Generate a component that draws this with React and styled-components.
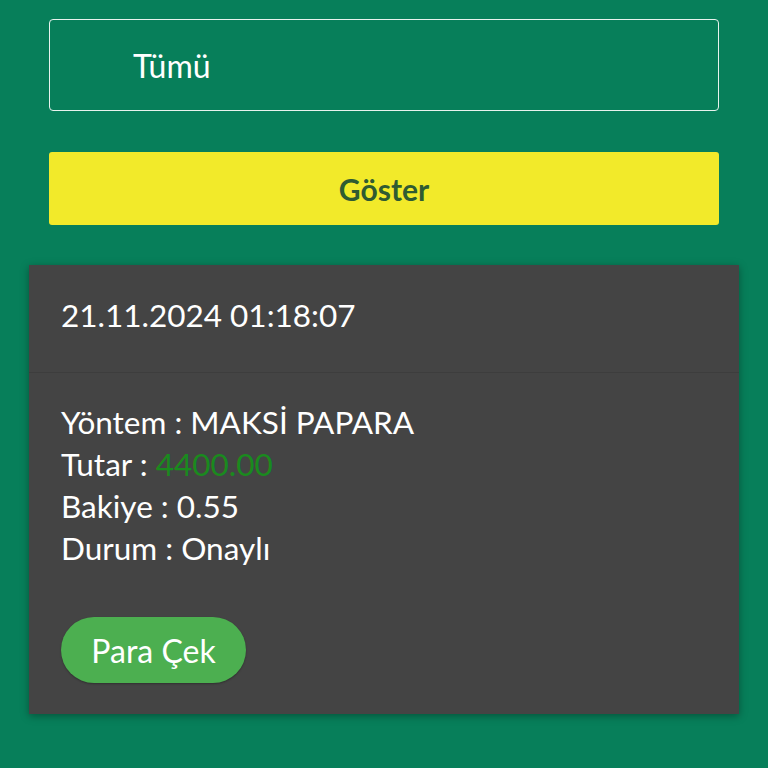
import React from 'react';
import styled, { createGlobalStyle } from 'styled-components';

const GlobalStyle = createGlobalStyle`
  html, body {
    margin: 0;
    padding: 0;
    background: #077f5a;
    font-family: Lato, "Noto Sans", sans-serif;
  }
`;

export default function App() {
    return (
        <Page>
            <GlobalStyle />
            <Filters>
                <Select>Tümü</Select>
                <ShowButton>Göster</ShowButton>
            </Filters>
            <Card>
                <CardHeader>21.11.2024 01:18:07</CardHeader>
                <CardBody>
                    <Line>Yöntem : MAKSİ PAPARA</Line>
                    <Line>Tutar : <Amount>4400.00</Amount></Line>
                    <Line>Bakiye : 0.55</Line>
                    <Line>Durum : Onaylı</Line>
                    <WithdrawButton>Para Çek</WithdrawButton>
                </CardBody>
            </Card>
        </Page>
    );
}

const Page = styled.div`
    display: flex;
    flex-direction: column;
    padding: 19px 29px 40px;
    min-height: 768px;
    box-sizing: border-box;
`;

const Filters = styled.div`
    display: flex;
    flex-direction: column;
    gap: 41px;
    margin: 0 20px 40px;
`;

const Select = styled.div`
    height: 92px;
    box-sizing: border-box;
    border: 1.5px solid #e8f3ee;
    border-radius: 4px;
    display: flex;
    align-items: center;
    padding-left: 83px;
    color: #fff;
    font-size: 32px;
`;

const ShowButton = styled.div`
    height: 73px;
    background: #f2ea2a;
    border-radius: 3px;
    display: flex;
    align-items: center;
    justify-content: center;
    color: #2f5b32;
    font-size: 30px;
    font-weight: 700;
`;

const Card = styled.div`
    background: #444444;
    box-shadow: 0 2px 8px rgba(0, 0, 0, 0.35);
    color: #fff;
`;

const CardHeader = styled.div`
    padding: 30px 32px 37px;
    font-size: 31.5px;
    line-height: 40px;
    border-bottom: 1px solid #3d3d3d;
`;

const CardBody = styled.div`
    padding: 28px 32px 31px;
    display: flex;
    flex-direction: column;
    align-items: flex-start;
`;

const Line = styled.div`
    font-size: 31.5px;
    line-height: 42px;
`;

const Amount = styled.span`
    color: #1a8a1e;
`;

const WithdrawButton = styled.div`
    margin-top: 48px;
    width: 185px;
    height: 66px;
    border-radius: 33px;
    background: #4caf50;
    display: flex;
    align-items: center;
    justify-content: center;
    font-size: 32px;
    color: #fff;
    box-shadow: 0 1px 2px rgba(0, 0, 0, 0.3);
`;
